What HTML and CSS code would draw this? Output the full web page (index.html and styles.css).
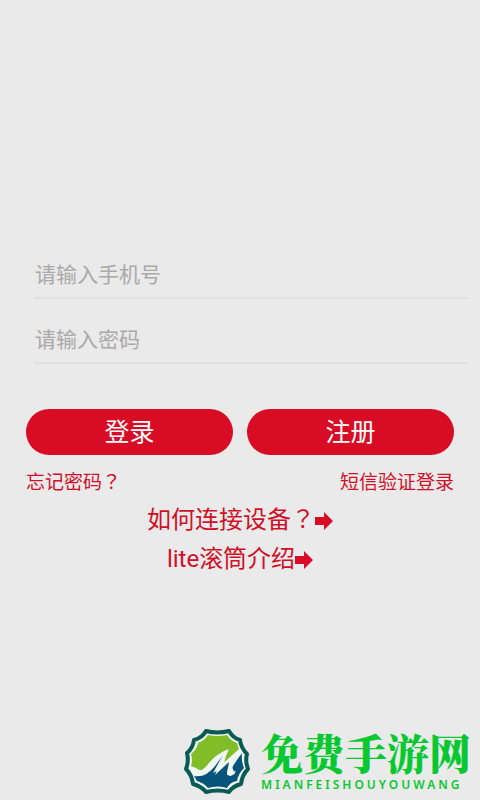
FILE: index.html
```html
<!DOCTYPE html>
<html lang="zh-CN">
<head>
<meta charset="utf-8">
<meta name="viewport" content="width=device-width, initial-scale=1">
<title>登录</title>
<link rel="stylesheet" href="styles.css">
</head>
<body>
<main class="page">
  <form class="login">
    <div class="fields">
      <input class="field" type="tel" placeholder="请输入手机号" aria-label="手机号">
      <input class="field" type="password" placeholder="请输入密码" aria-label="密码">
    </div>
    <div class="actions">
      <button class="button" type="submit">登录</button>
      <button class="button" type="button">注册</button>
    </div>
    <div class="options">
      <a class="link" href="#forgot">忘记密码<span class="mark" lang="zh-TW">？</span></a>
      <a class="link" href="#sms">短信验证登录</a>
    </div>
  </form>
  <nav class="help">
    <a class="help-link" href="#connect"><span>如何连接设备<span class="mark" lang="zh-TW">？</span></span><svg class="arrow" viewBox="0 0 18 18" aria-hidden="true"><path d="M0 5h9V0l9 9-9 9v-5H0z"/></svg></a>
    <a class="help-link" href="#intro"><span>lite滚筒介绍</span><svg class="arrow" viewBox="0 0 18 18" aria-hidden="true"><path d="M0 5h9V0l9 9-9 9v-5H0z"/></svg></a>
  </nav>
  <footer class="brand">
    <svg class="brand-logo" viewBox="0 0 66 66" aria-hidden="true">
      <path fill="#f1f7f2" stroke="#075b54" stroke-width="4" stroke-linejoin="round" d="M22 2Q33 5 45 2Q49 9 56 11Q57 19 63 25Q61 32 64 40Q58 46 57 55Q49 57 45 63Q34 60 22 63Q17 57 9 55Q8 46 2 40Q5 32 3 24Q9 19 10 11Q18 9 22 2z"/>
      <path fill="#80bd28" d="M24 6Q33 8 43 6Q47 12 53 14L55 20L35 38L45 21Q31 28 24 38Q19 44 12 39L7 37Q9 31 7 25Q13 20 14 14Q20 12 24 6z"/>
      <path fill="#07547a" d="M58 24Q57 32 60 39Q54 45 53 52Q46 53 43 59Q34 56 24 59Q20 54 13 52L10 47Q22 49 31 37L40 25L31 46L45 33L43 46L51 45L48 38z"/>
      <path fill="#f1f7f2" d="M8 39Q11 42 14 40L13 43Q20 41 25 34Q31 26 44 20L40 34L58 21Q52 30 49 37Q46 44 52 42Q48 49 44 46Q41 43 48 30L33 42L29 44L39 26Q34 30 30 37Q21 48 12 46Q7 45 8 39z"/>
    </svg>
    <div class="brand-text">
      <span class="brand-name">免费手游网</span>
      <span class="brand-latin">MIANFEISHOUYOUWANG</span>
    </div>
  </footer>
</main>
</body>
</html>
```
FILE: styles.css
```css
* {
  box-sizing: border-box;
}

body {
  margin: 0;
  background: #eaeaea;
  color: #d01028;
  font-family: Roboto, "Noto Sans CJK SC", sans-serif;
}

.page {
  display: flex;
  flex-direction: column;
  min-height: 100vh;
  padding-top: 251px;
}

.fields {
  display: flex;
  flex-direction: column;
  gap: 17px;
  padding: 0 12px 0 34px;
}

.field {
  width: 100%;
  height: 48px;
  padding: 2px 1px 0;
  border: 0;
  border-bottom: 2px solid #e0e0e0;
  border-radius: 0;
  background: transparent;
  color: #333;
  font: inherit;
  font-size: 21px;
  outline: none;
}

.field::placeholder {
  color: #a9a9a9;
  opacity: 1;
}

.actions {
  display: flex;
  gap: 14px;
  padding: 45px 26px 0;
}

.button {
  flex: 1;
  height: 46px;
  padding: 2px 0 0;
  border: 0;
  border-radius: 23px;
  background: #d80c24;
  color: #fff;
  font: inherit;
  font-size: 25px;
  line-height: 44px;
}

.options {
  display: flex;
  justify-content: space-between;
  padding: 14px 26px 0;
}

.link {
  color: inherit;
  font-size: 19px;
  line-height: 28px;
  text-decoration: none;
}

.mark {
  font-family: "Noto Sans CJK TC", sans-serif;
  line-height: 1;
}

.help {
  display: flex;
  flex-direction: column;
  align-items: center;
  padding-top: 4px;
}

.help-link {
  display: flex;
  align-items: center;
  color: inherit;
  font-size: 24px;
  line-height: 39px;
  text-decoration: none;
}

.arrow {
  width: 18px;
  height: 18px;
  fill: #d80c24;
}

.brand {
  display: flex;
  justify-content: flex-end;
  gap: 11px;
  margin-top: auto;
  padding: 0 9px 5px 0;
}

.brand-logo {
  width: 66px;
  height: 66px;
}

.brand-text {
  display: flex;
  flex-direction: column;
  color: #08c832;
}

.brand-name {
  font-family: "Noto Serif CJK SC", "Noto Sans CJK SC", serif;
  font-size: 42px;
  font-weight: 900;
  line-height: 46px;
}

.brand-latin {
  font-family: "Noto Sans", sans-serif;
  font-size: 12px;
  font-weight: 600;
  letter-spacing: 3px;
  line-height: 20px;
}
```
